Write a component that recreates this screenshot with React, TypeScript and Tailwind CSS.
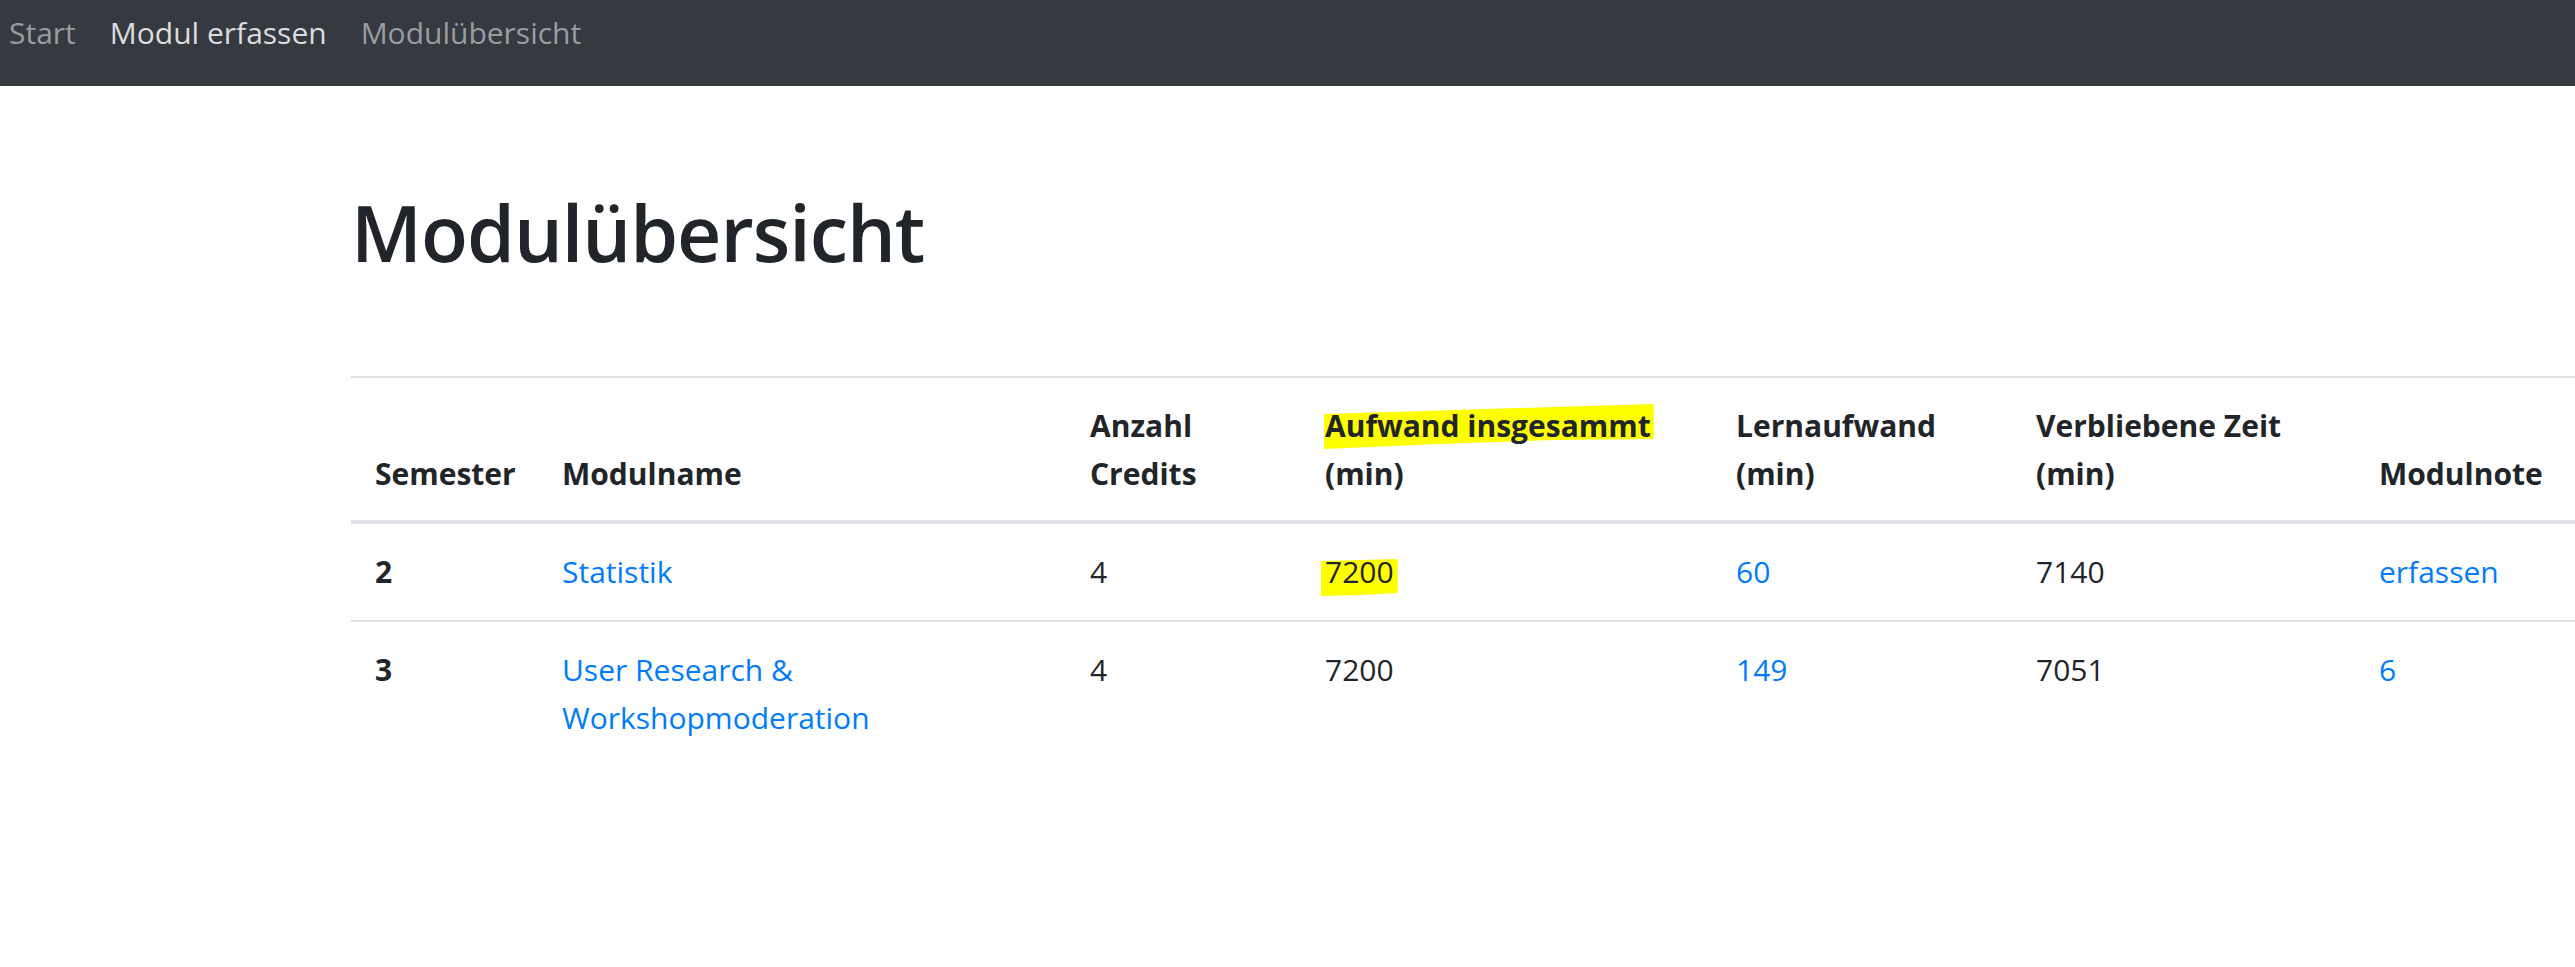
import React from "react";

const font = { fontFamily: '"Open Sans", "Liberation Sans", sans-serif' };

function HeaderMark({ children }: { children: React.ReactNode }) {
  return (
    <span className="relative isolate inline-block">
      <svg
        className="absolute -z-10 left-[-1px] top-0 h-[48px] w-[calc(100%+4px)]"
        viewBox="0 0 100 48"
        preserveAspectRatio="none"
      >
        <polygon points="0,12 30,9 70,5 100,2 100,37 70,38 35,42 0,47" fill="#ffff00" />
      </svg>
      {children}
    </span>
  );
}

function ValueMark({ children }: { children: React.ReactNode }) {
  return (
    <span className="relative isolate inline-block">
      <svg
        className="absolute -z-10 left-[-4px] top-[11px] h-[37px] w-[calc(100%+8px)]"
        viewBox="0 0 100 37"
        preserveAspectRatio="none"
      >
        <polygon points="0,2 100,0 100,34 50,36 0,37" fill="#ffff00" />
      </svg>
      {children}
    </span>
  );
}

export default function App() {
  const th = "px-[24px] pt-[24px] pb-[22px] align-bottom text-left font-bold border-t-2 border-b-4 border-[#dee2e6]";
  const td = "px-[24px] py-[24px] align-top text-left border-t-2 border-[#dee2e6]";
  const link = "text-[#007bff]";
  return (
    <div className="min-h-[967px] bg-white text-[#212529]" style={font}>
      <nav className="h-[86px] bg-[#343a40] flex items-start pl-[9px] pt-[10px] gap-[34px] text-[30px] leading-[45px]">
        <span className="text-[#9a9da0]">Start</span>
        <span className="text-[#dcdddf]">Modul erfassen</span>
        <span className="text-[#9a9da0]">Modulübersicht</span>
      </nav>
      <main className="pl-[351px]">
        <h1 className="mt-[99px] text-[77px] leading-[96px] font-semibold tracking-[-1px]">Modulübersicht</h1>
        <table className="mt-[95px] w-[2224px] table-fixed border-collapse text-[30px] leading-[48px]">
          <colgroup>
            <col className="w-[187px]" />
            <col className="w-[528px]" />
            <col className="w-[235px]" />
            <col className="w-[411px]" />
            <col className="w-[300px]" />
            <col className="w-[343px]" />
            <col className="w-[220px]" />
          </colgroup>
          <thead>
            <tr>
              <th className={th}>Semester</th>
              <th className={th}>Modulname</th>
              <th className={th}>
                Anzahl
                <br />
                Credits
              </th>
              <th className={th}>
                <HeaderMark>Aufwand insgesammt</HeaderMark>
                <br />
                (min)
              </th>
              <th className={th}>
                Lernaufwand
                <br />
                (min)
              </th>
              <th className={th}>
                Verbliebene Zeit
                <br />
                (min)
              </th>
              <th className={th}>Modulnote</th>
            </tr>
          </thead>
          <tbody>
            <tr>
              <td className={`${td} font-bold`}>2</td>
              <td className={td}>
                <span className={link}>Statistik</span>
              </td>
              <td className={td}>4</td>
              <td className={td}>
                <ValueMark>7200</ValueMark>
              </td>
              <td className={td}>
                <span className={link}>60</span>
              </td>
              <td className={td}>7140</td>
              <td className={td}>
                <span className={link}>erfassen</span>
              </td>
            </tr>
            <tr>
              <td className={`${td} font-bold`}>3</td>
              <td className={td}>
                <span className={link}>
                  User Research &amp;
                  <br />
                  Workshopmoderation
                </span>
              </td>
              <td className={td}>4</td>
              <td className={td}>7200</td>
              <td className={td}>
                <span className={link}>149</span>
              </td>
              <td className={td}>7051</td>
              <td className={td}>
                <span className={link}>6</span>
              </td>
            </tr>
          </tbody>
        </table>
      </main>
    </div>
  );
}
